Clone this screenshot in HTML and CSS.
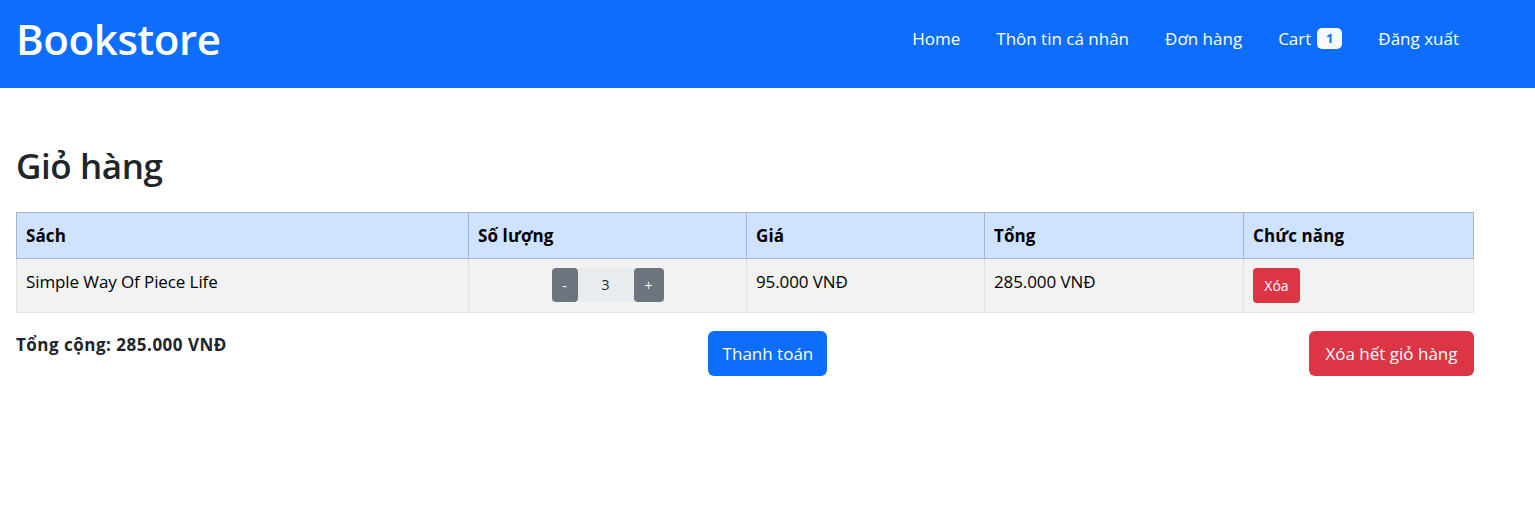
FILE: index.html
```html
<!DOCTYPE html>
<html lang="vi">
<head>
<meta charset="utf-8">
<title>Bookstore</title>
<link rel="stylesheet" href="styles.css">
</head>
<body>
<header class="navbar">
  <div class="wrap nav-inner">
    <a class="brand" href="#">Bookstore</a>
    <nav class="nav-links">
      <a href="#">Home</a>
      <a href="#">Thôn tin cá nhân</a>
      <a href="#">Đơn hàng</a>
      <a href="#">Cart <span class="badge">1</span></a>
      <a href="#">Đăng xuất</a>
    </nav>
  </div>
</header>
<main class="wrap main">
  <h2 class="title">Giỏ hàng</h2>
  <table class="cart">
    <thead>
      <tr>
        <th class="c1">Sách</th>
        <th class="c2">Số lượng</th>
        <th class="c3">Giá</th>
        <th class="c4">Tổng</th>
        <th class="c5">Chức năng</th>
      </tr>
    </thead>
    <tbody>
      <tr>
        <td>Simple Way Of Piece Life</td>
        <td class="qty-cell">
          <div class="qty">
            <button class="btn-q">-</button>
            <span class="qty-val">3</span>
            <button class="btn-q">+</button>
          </div>
        </td>
        <td>95.000 VNĐ</td>
        <td>285.000 VNĐ</td>
        <td><button class="btn-del">Xóa</button></td>
      </tr>
    </tbody>
  </table>
  <div class="summary">
    <div class="total">Tổng cộng: 285.000 VNĐ</div>
    <button class="btn btn-primary">Thanh toán</button>
    <button class="btn btn-danger">Xóa hết giỏ hàng</button>
  </div>
</main>
</body>
</html>
```
FILE: styles.css
```css
* { box-sizing: border-box; }
body {
  margin: 0;
  font-family: "Open Sans", "Noto Sans", sans-serif;
  color: #212529;
  background: #fff;
}
.wrap {
  width: 1458px;
  margin-left: 16px;
}
.navbar {
  background: #0d6efd;
  height: 88px;
}
.nav-inner {
  display: flex;
  justify-content: space-between;
  align-items: center;
  height: 77px;
}
.brand {
  color: #fff;
  text-decoration: none;
  font-size: 42px;
  font-weight: 600;
  letter-spacing: -0.4px;
}
.nav-links {
  display: flex;
  align-items: center;
  margin-right: -3px;
}
.nav-links a {
  color: #fff;
  text-decoration: none;
  font-size: 17px;
  padding: 0 18px;
  display: flex;
  align-items: center;
}
.nav-links a.cart-link { padding-right: 14px; }
.badge {
  display: inline-block;
  background: #f8f9fa;
  color: #0d6efd;
  font-size: 13px;
  font-weight: 700;
  border-radius: 5px;
  width: 25px;
  height: 21px;
  line-height: 21px;
  text-align: center;
  margin-left: 6px;
}
.main { padding-top: 57px; }
.title {
  margin: 0 0 25px;
  font-size: 35px;
  font-weight: 600;
  line-height: 1.2;
  letter-spacing: -0.4px;
}
.cart {
  width: 100%;
  border-collapse: collapse;
  font-size: 17px;
}
.cart th, .cart td {
  text-align: left;
  vertical-align: top;
  padding: 0 9px;
}
.cart th {
  background: #cfe2ff;
  border: 1px solid #a6b5cc;
  height: 46px;
  vertical-align: middle;
  font-weight: 700;
  color: #000;
  letter-spacing: 0.1px;
}
.cart td {
  background: #f2f2f2;
  border: 1px solid #dee2e6;
  height: 54px;
  padding-top: 11px;
  color: #000;
  letter-spacing: -0.1px;
}
.c1 { width: 452px; }
.c2 { width: 278px; }
.c3 { width: 238px; }
.c4 { width: 259px; }
.qty-cell { padding-top: 9px !important; }
.qty {
  display: flex;
  justify-content: center;
}
.btn-q {
  width: 26px;
  height: 34px;
  border: none;
  border-radius: 4px;
  background: #6c757d;
  color: #fff;
  font-family: inherit;
  font-size: 14px;
  padding: 0;
}
.btn-q:last-child { width: 30px; }
.qty-val {
  width: 56px;
  height: 34px;
  background: #e9ecef;
  text-align: center;
  line-height: 34px;
  font-size: 14px;
  color: #212529;
}
.btn-del {
  margin-top: -2px;
  background: #dc3545;
  color: #fff;
  border: none;
  border-radius: 4px;
  font-family: inherit;
  font-size: 14px;
  width: 47px;
  height: 35px;
  padding: 0;
}
.summary {
  display: flex;
  justify-content: space-between;
  align-items: flex-start;
  margin-top: 18px;
}
.total {
  font-weight: 700;
  font-size: 17px;
  letter-spacing: 0.5px;
  padding-top: 2px;
}
.btn {
  border: none;
  border-radius: 6px;
  color: #fff;
  font-family: inherit;
  font-size: 17px;
  height: 45px;
  padding: 0;
  letter-spacing: 0;
}
.btn-primary { background: #0d6efd; width: 119px; }
.btn-danger { background: #dc3545; width: 165px; }
```
